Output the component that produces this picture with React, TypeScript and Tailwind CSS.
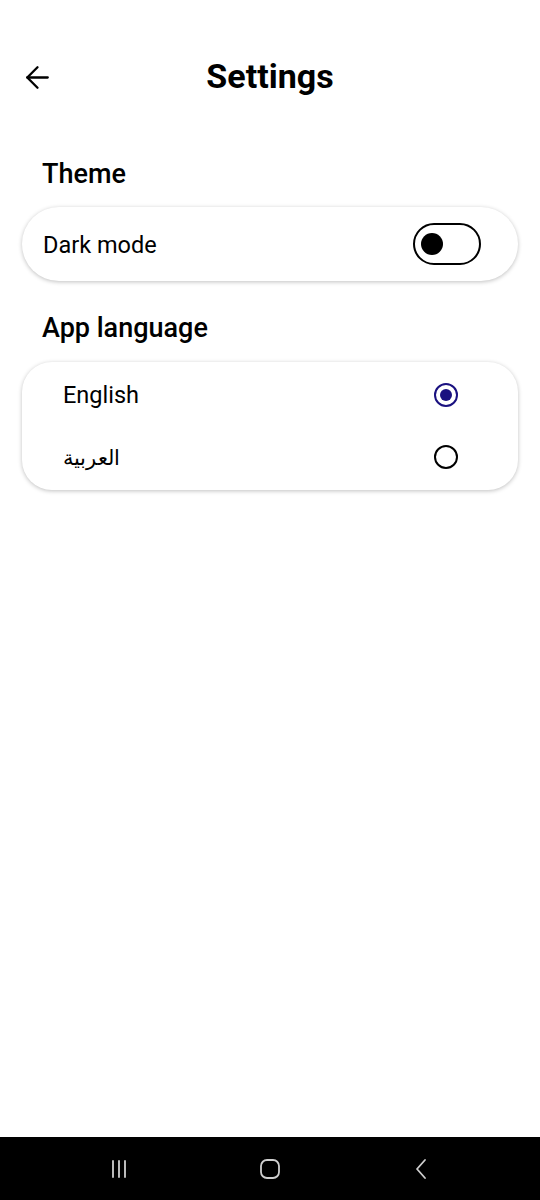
import { ArrowLeft } from "lucide-react";

/**
 * Settings screen — theme toggle and app language picker.
 */
const languages = [
  { code: "en", label: "English", selected: true, size: "text-[23.5px]" },
  { code: "ar", label: "العربية", selected: false, size: "text-[21px]" },
];

function Radio({ selected }: { selected: boolean }) {
  return selected ? (
    <span className="flex h-[24px] w-[24px] items-center justify-center rounded-full border-[2.5px] border-[#1a1180]">
      <span className="block h-[12px] w-[12px] rounded-full bg-[#1a1180]" />
    </span>
  ) : (
    <span className="block h-[24px] w-[24px] rounded-full border-[2.5px] border-black" />
  );
}

export default function App() {
  return (
    <div className="flex h-[1200px] w-[540px] flex-col bg-white font-['Roboto',sans-serif] text-black">
      {/* Top bar */}
      <div className="relative flex h-[112px] items-center justify-center pt-[40px]">
        <button className="absolute left-[19px] top-[59px] flex h-[36px] w-[36px] items-center justify-center">
          <ArrowLeft size={35} strokeWidth={1.6} />
        </button>
        <h1 className="text-[34px] font-bold leading-none">Settings</h1>
      </div>

      <main className="flex flex-1 flex-col px-[22px]">
        {/* Theme */}
        <h2 className="ml-[20px] mt-[49px] text-[27px] font-medium leading-none">Theme</h2>
        <div className="mt-[19px] flex h-[74px] items-center justify-between rounded-full bg-white pl-[21px] pr-[37px] shadow-[0_1px_4px_rgba(0,0,0,0.25)]">
          <span className="pt-[3px] text-[23.5px] leading-none">Dark mode</span>
          <span className="flex h-[42px] w-[68px] items-center rounded-full border-[2.5px] border-black px-[6px]">
            <span className="block h-[22px] w-[22px] rounded-full bg-black" />
          </span>
        </div>

        {/* Language */}
        <h2 className="ml-[20px] mt-[34px] text-[27px] font-medium leading-none">App language</h2>
        <div className="mt-[20px] flex flex-col rounded-[30px] bg-white py-[2px] pl-[41px] pr-[60px] shadow-[0_1px_4px_rgba(0,0,0,0.25)]">
          {languages.map((lang) => (
            <div key={lang.code} className="flex h-[62px] items-center justify-between">
              <span className={`${lang.size} pt-[2px] leading-none`}>{lang.label}</span>
              <Radio selected={lang.selected} />
            </div>
          ))}
        </div>
      </main>

      {/* System nav bar */}
      <nav className="flex h-[63px] items-center justify-center gap-[129px] bg-black">
        <svg width="22" height="22" viewBox="0 0 22 22" fill="none" stroke="#cfcfcf" strokeWidth="1.8" strokeLinecap="round">
          <path d="M5 3v16M11 3v16M17 3v16" />
        </svg>
        <svg width="22" height="22" viewBox="0 0 22 22" fill="none" stroke="#cfcfcf" strokeWidth="1.8">
          <rect x="2" y="2" width="18" height="18" rx="6" />
        </svg>
        <svg width="22" height="22" viewBox="0 0 22 22" fill="none" stroke="#cfcfcf" strokeWidth="1.8" strokeLinecap="round" strokeLinejoin="round">
          <path d="M15 2L7 11l8 9" />
        </svg>
      </nav>
    </div>
  );
}
